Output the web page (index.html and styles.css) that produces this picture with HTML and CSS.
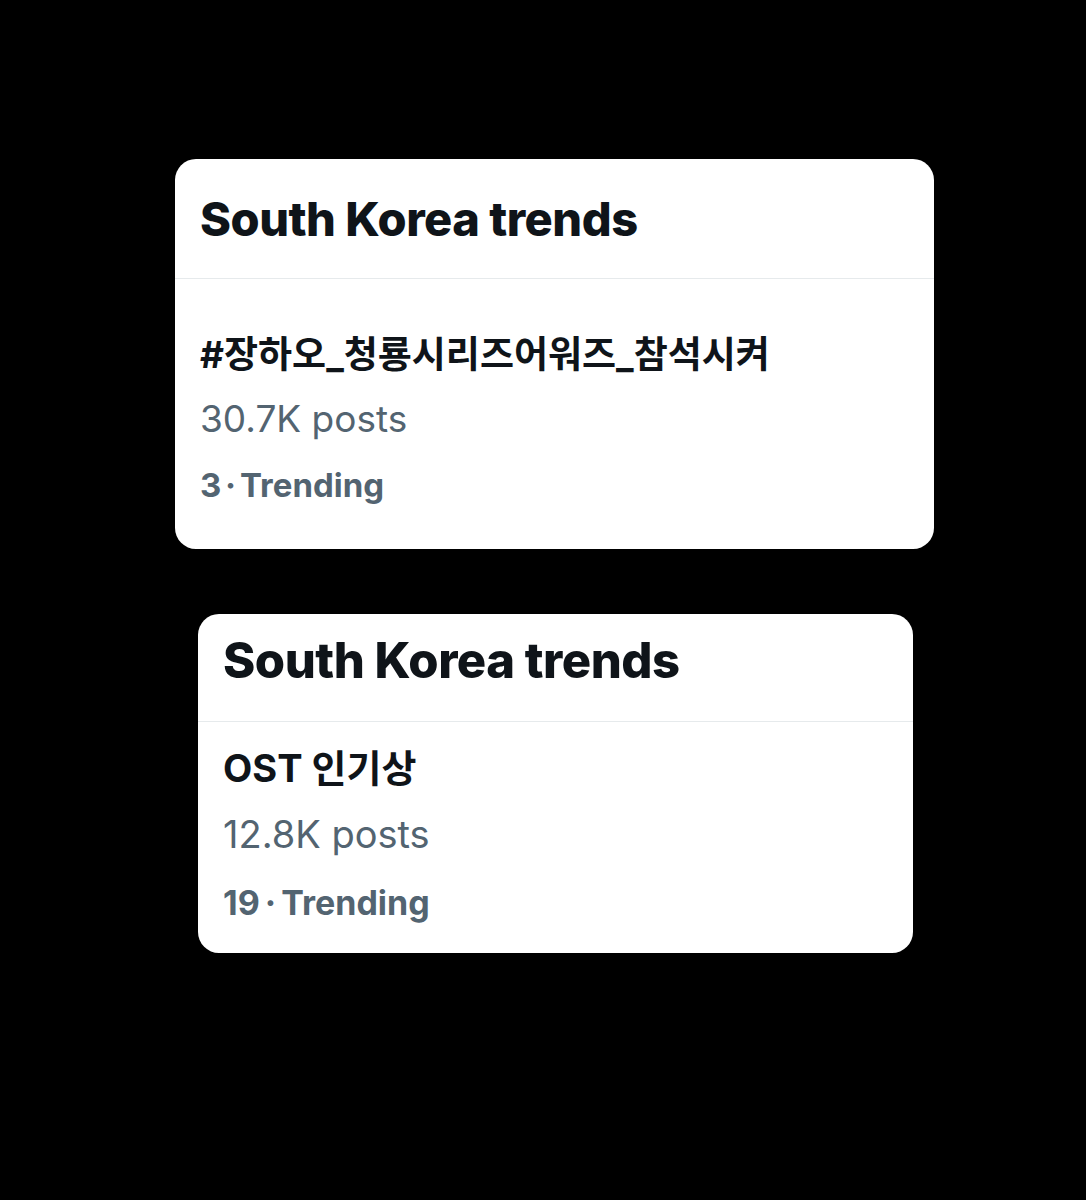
FILE: index.html
```html
<!DOCTYPE html>
<html lang="ko">
<head>
<meta charset="utf-8">
<link rel="stylesheet" href="styles.css">
</head>
<body>
<main class="page">
  <section class="card card-a">
    <header class="card-head"><h2 class="title">South Korea trends</h2></header>
    <div class="card-body">
      <div class="trend">#장하오_청룡시리즈어워즈_참석시켜</div>
      <div class="posts">30.7K posts</div>
      <div class="rank">3 · Trending</div>
    </div>
  </section>
  <section class="card card-b">
    <header class="card-head"><h2 class="title">South Korea trends</h2></header>
    <div class="card-body">
      <div class="trend">OST 인기상</div>
      <div class="posts">12.8K posts</div>
      <div class="rank">19 · Trending</div>
    </div>
  </section>
</main>
</body>
</html>
```
FILE: styles.css
```css
html, body {
  margin: 0;
  padding: 0;
  background: #000;
}
.page {
  width: 1086px;
  height: 1200px;
  display: flex;
  flex-direction: column;
  padding-top: 159px;
  box-sizing: border-box;
  font-family: Inter, "Noto Sans CJK KR", sans-serif;
}
.card {
  background: #fff;
  border-radius: 21px;
  display: flex;
  flex-direction: column;
  box-sizing: border-box;
  overflow: hidden;
}
.card-a {
  margin-left: 175px;
  width: 759px;
  height: 390px;
}
.card-b {
  margin-left: 198px;
  margin-top: 65px;
  width: 715px;
  height: 339px;
}
.card-head {
  border-bottom: 1px solid #e6eaec;
  display: flex;
  align-items: center;
  padding-left: 25px;
  box-sizing: border-box;
}
.card-a .card-head { height: 120px; }
.card-b .card-head { height: 108px; align-items: flex-start; padding-top: 17px; }
.title {
  margin: 0;
  font-weight: 800;
  font-size: 47px;
  color: #0f1419;
  letter-spacing: -0.5px;
}
.card-body {
  display: flex;
  flex-direction: column;
  padding-left: 25px;
}
.card-a .card-body { padding-top: 49px; }
.card-b .card-body { padding-top: 19px; }
.trend {
  font-weight: 700;
  font-size: 37px;
  color: #0f1419;
  line-height: 54px;
}
.posts {
  font-size: 37px;
  color: #536471;
  line-height: 70px;
  margin-top: 2px;
}
.rank {
  font-weight: 700;
  font-size: 33px;
  color: #536471;
  line-height: 46px;
  word-spacing: -4px;
  margin-top: 8px;
}
.card-b .title { font-size: 49px; }
.card-b .trend { font-size: 38px; }
.card-b .posts { font-size: 38px; margin-top: 4px; }
.card-b .rank { font-size: 34px; margin-top: 11px; word-spacing: -3px; }
```
